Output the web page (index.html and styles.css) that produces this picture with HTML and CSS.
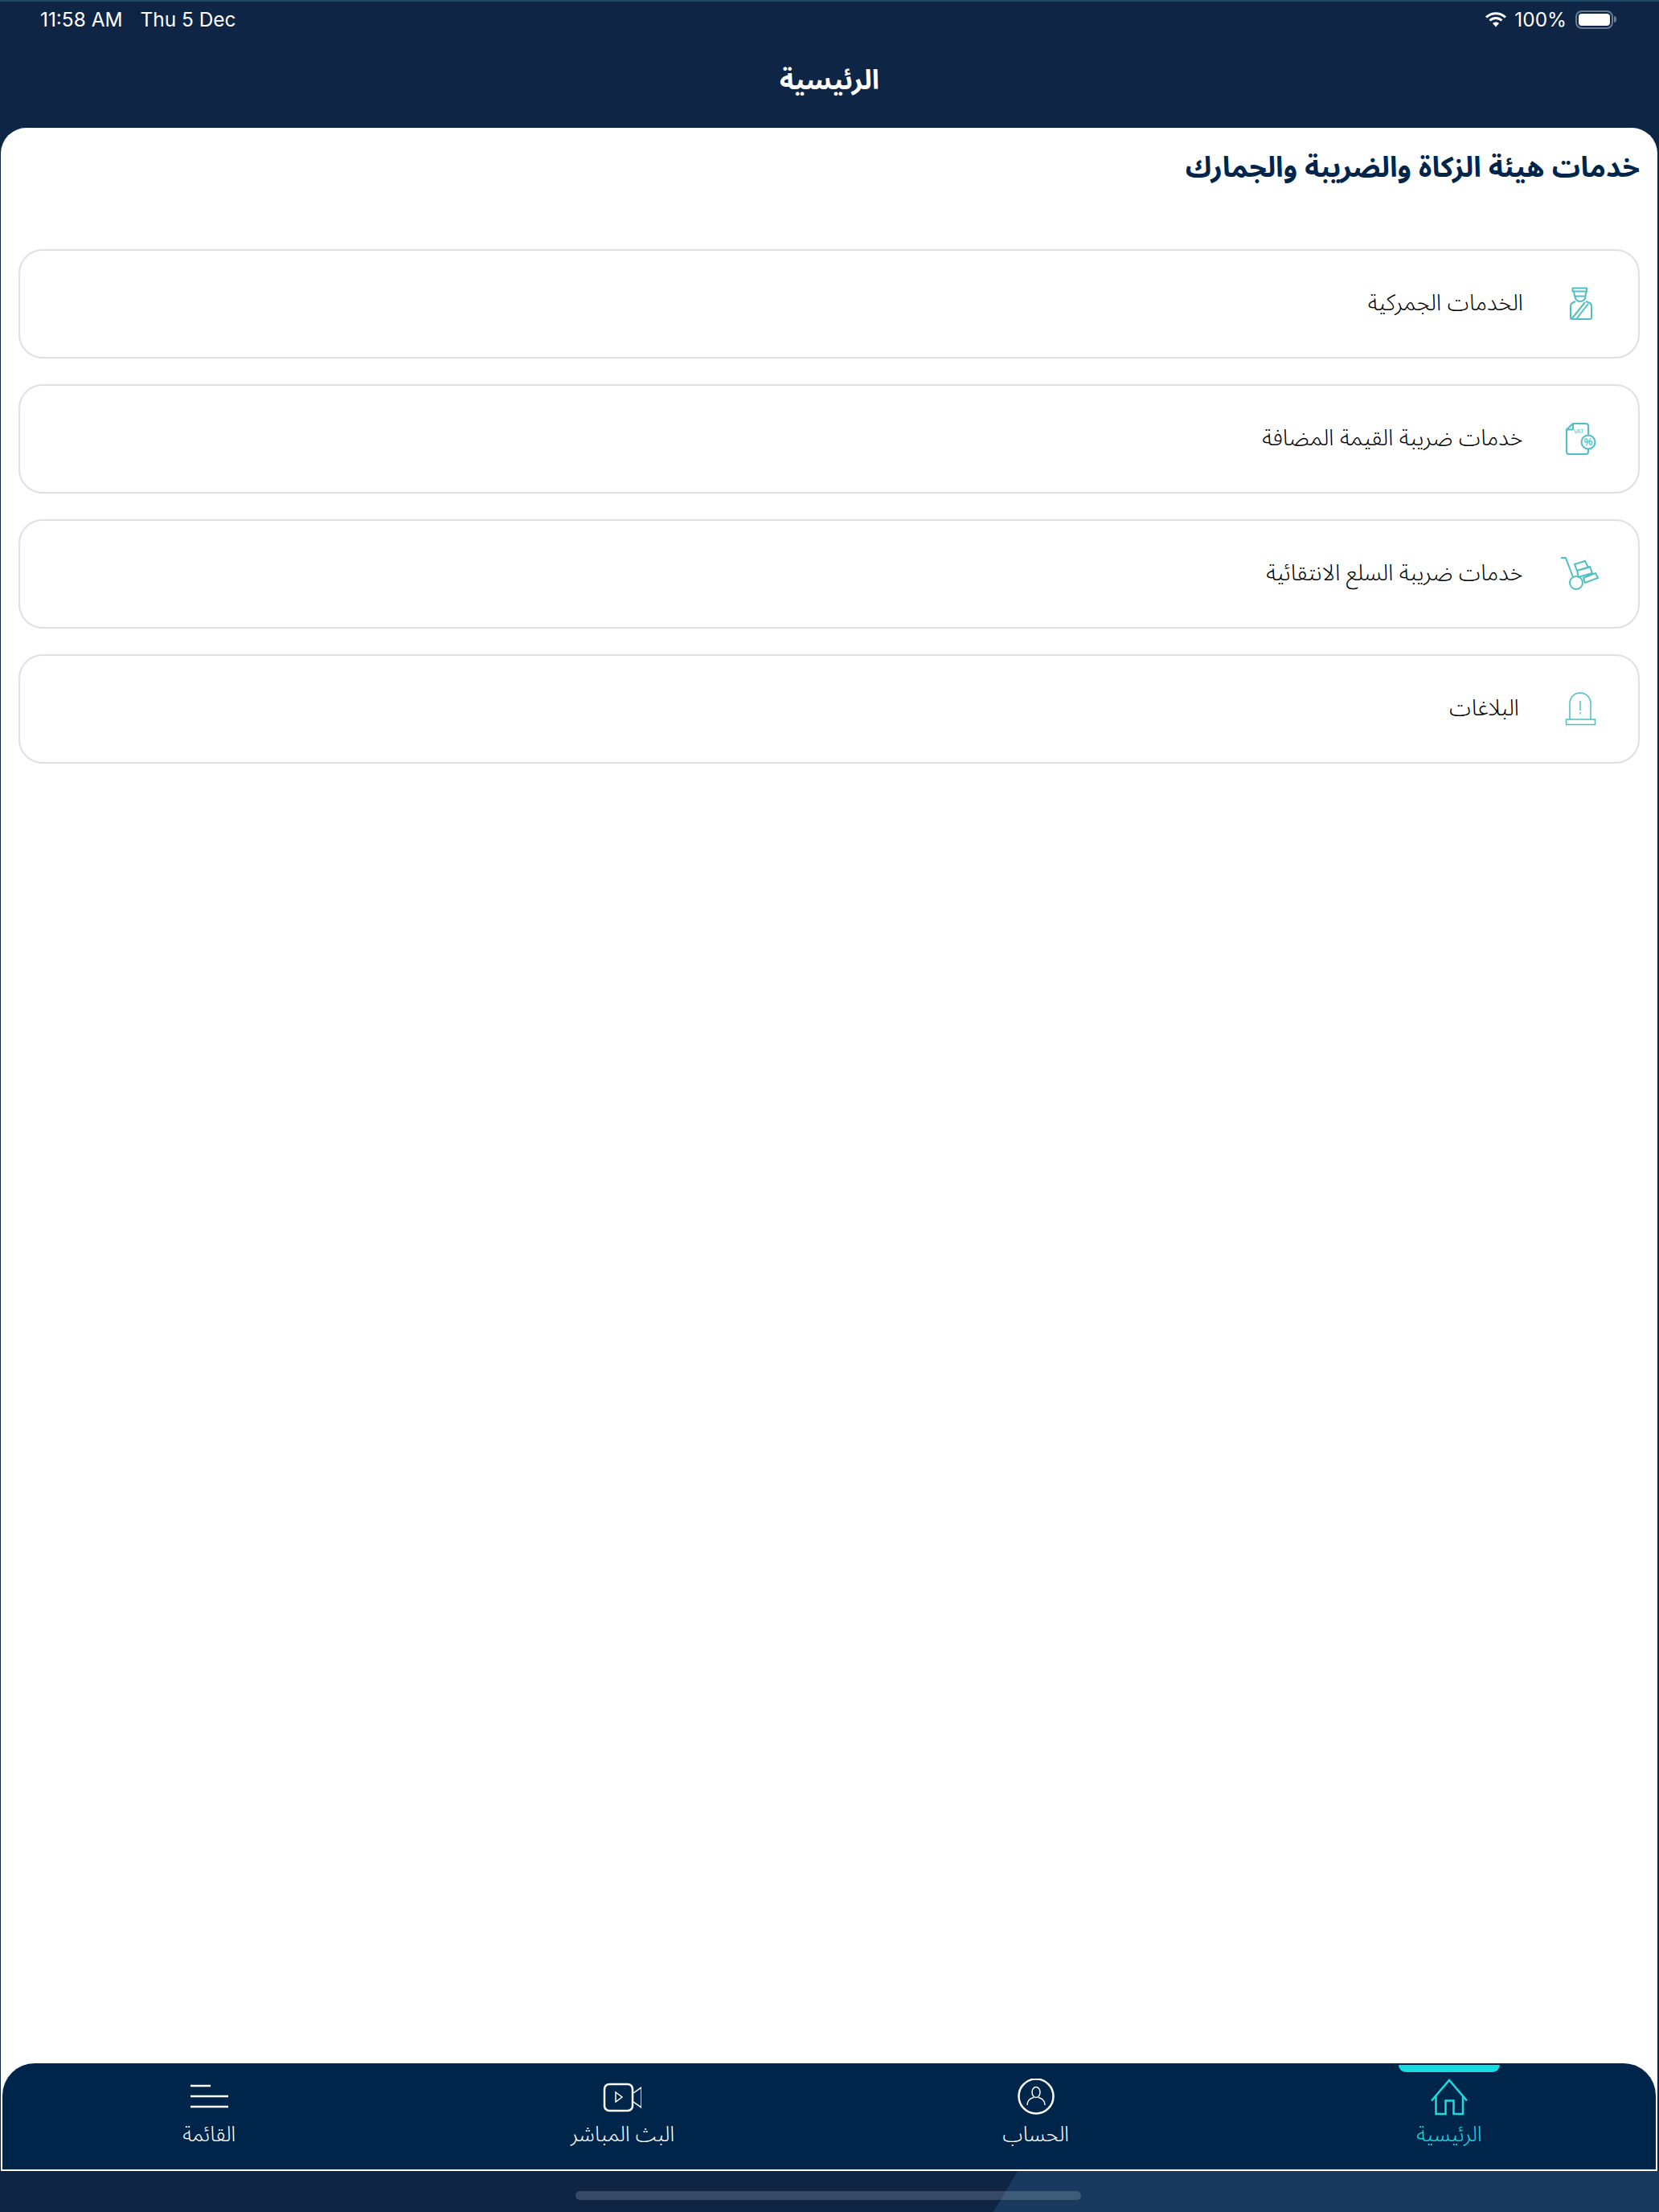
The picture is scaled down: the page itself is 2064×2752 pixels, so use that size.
FILE: index.html
```html
<!DOCTYPE html>
<html lang="ar" dir="rtl">
<head>
<meta charset="utf-8">
<title>الرئيسية</title>
<link rel="stylesheet" href="styles.css">
</head>
<body>
<div class="app">
  <header class="top">
    <div class="status" dir="ltr">
      <div class="status-left"><span>11:58 AM</span><span>Thu 5 Dec</span></div>
      <div class="status-right">
        <svg class="wifi" width="28" height="20" viewBox="0 0 28 20"><path class="wifi-arc" d="M2 7.5C9 1 19 1 26 7.5M6.5 11.5C11 7.5 17 7.5 21.5 11.5"/><path class="wifi-dot" d="M10 15c2.400-2 5.600-2 8 0l-4 4.500z"/></svg>
        <span>100%</span>
        <div class="battery"><div class="battery-fill"></div></div>
        <div class="battery-cap"></div>
      </div>
    </div>
    <h1 class="page-title">الرئيسية</h1>
  </header>

  <main class="panel">
    <section class="content">
      <h2 class="section-title">خدمات هيئة الزكاة والضريبة والجمارك</h2>
      <ul class="cards">
        <li class="card">
          <svg class="card-icon" viewBox="0 0 52 52"><path d="M16.500 6.500H34V10.500H16.500ZM18 10.500L19 16.500H32.500L33.500 10.500M19.500 16.500C19.500 20.500 22.500 23 26 23S32.500 20.500 32.500 16.500M20 23L16 25Q14 26 14 29V43Q14 45 16 45H38Q40 45 40 43V29Q40 26 38 25L33 23M32 24L15.500 44.500M36 26L21.500 44.500"/></svg>
          <span class="card-label">الخدمات الجمركية</span>
        </li>
        <li class="card">
          <svg class="card-icon" viewBox="0 0 52 52"><path d="M36 21.500V10A3 3 0 0 0 33 7H17L9 14.500V42A3 3 0 0 0 12 45H33A3 3 0 0 0 36 42V38.500M17 7V13Q17 14.500 15.500 14.500H9"/><circle cx="36" cy="30" r="8.500"/><text class="vat" x="24" y="19" direction="ltr">VAT</text><text class="percent" x="36" y="34" direction="ltr">%</text></svg>
          <span class="card-label">خدمات ضريبة القيمة المضافة</span>
        </li>
        <li class="card">
          <svg class="card-icon" viewBox="0 0 52 52"><path d="M2 6H8L17 30M19 14L32 10L36 18L22 22ZM22 22L38 17L41 25L24 30ZM30 31L45 25L48 31L32 37Z"/><circle cx="21" cy="37" r="8"/></svg>
          <span class="card-label">خدمات ضريبة السلع الانتقائية</span>
        </li>
        <li class="card card-short">
          <svg class="card-icon card-icon-thin" viewBox="0 0 52 52"><path d="M8.500 39H44.500V45.500H8.500ZM13 39V19A13 13 0 0 1 39 19V39M26 16V28M26 30V32.500"/></svg>
          <span class="card-label">البلاغات</span>
        </li>
      </ul>
    </section>

    <nav class="tabbar">
      <a class="tab tab-active">
        <span class="tab-marker"></span>
        <svg class="tab-icon" viewBox="0 0 48 46"><path d="M2 27.500L24 2L46 27.500M7.500 21V44H19.500V27.500H29.500V44H41V21"/></svg>
        <span class="tab-label">الرئيسية</span>
      </a>
      <a class="tab">
        <svg class="tab-icon" viewBox="0 0 48 46"><circle cx="24" cy="22" r="21.500"/><ellipse class="thin" cx="24" cy="17" rx="5" ry="6.500"/><path class="thin" d="M13 33C13 27 17 24.500 21 23.500M35 33C35 27 31 24.500 27 23.500"/></svg>
        <span class="tab-label">الحساب</span>
      </a>
      <a class="tab">
        <svg class="tab-icon" viewBox="-1 0 48 46"><rect x="1" y="7" width="35" height="33" rx="6"/><path class="thin" d="M37 18L47 11V36L37 29M15 17L23 23L15 29Z"/></svg>
        <span class="tab-label">البث المباشر</span>
      </a>
      <a class="tab">
        <svg class="tab-icon" viewBox="-1 0 48 46"><path d="M0 9H25M0 22H47M0 35H47"/></svg>
        <span class="tab-label">القائمة</span>
      </a>
    </nav>
  </main>

  <footer class="bottom"><div class="home-indicator"></div></footer>
</div>
</body>
</html>
```

FILE: styles.css
```css
* { box-sizing: border-box; }
html, body { margin: 0; padding: 0; }
body { font-family: "Noto Sans Arabic", "DejaVu Sans", sans-serif; background: #0f2545; }

.app { width: 2064px; height: 2752px; display: flex; flex-direction: column; background: #0f2545; border-top: 2px solid #1a4a66; }

.top { height: 157px; flex: none; color: #fff; }
.status { height: 44px; padding: 0 53px 0 50px; display: flex; justify-content: space-between; align-items: center; font-family: Inter, "Liberation Sans", sans-serif; font-size: 24.400px; }
.status-left { display: flex; gap: 22px; }
.status-right { display: flex; align-items: center; }
.wifi { margin-right: 9px; }
.wifi-arc { fill: none; stroke: #fff; stroke-width: 3; }
.wifi-dot { fill: #fff; }
.battery { width: 47px; height: 23px; margin-left: 11px; border: 2px solid #6a7a90; border-radius: 8px; padding: 2px; }
.battery-fill { height: 100%; background: #fff; border-radius: 4px; }
.battery-cap { width: 3px; height: 8px; margin-left: 1px; background: #6a7a90; border-radius: 0 3px 3px 0; }
.page-title { margin: 33px 0 0; text-align: center; font-size: 33.500px; line-height: 44px; font-weight: 700; }

.panel { flex: 1; min-height: 0; margin: 0 2px 0 1px; background: #fff; border-radius: 32px 32px 0 0; display: flex; flex-direction: column; padding-bottom: 2px; }
.content { flex: 1; padding: 26px 22px 0 22px; }
.section-title { margin: 0; font-size: 35px; line-height: 48px; font-weight: 700; color: #00254a; }
.cards { list-style: none; margin: 77px 0 0; padding: 0; display: flex; flex-direction: column; gap: 32px; }
.card { height: 136px; border: 2px solid #e0e0e0; border-radius: 30px; display: flex; align-items: center; padding-right: 46px; gap: 45px; }
.card-short { gap: 50px; }
.card-icon { width: 52px; height: 52px; flex: none; fill: none; stroke: #4fbfc4; stroke-width: 2; }
.card-icon-thin { stroke-width: 1.500; }
.card-icon .vat { font: 7px "Liberation Sans", sans-serif; fill: #4fbfc4; stroke: none; text-anchor: middle; }
.card-icon .percent { font: 700 12px "Liberation Sans", sans-serif; fill: #4fbfc4; stroke: none; text-anchor: middle; }
.card-label { font-size: 28px; line-height: 40px; font-weight: 300; color: #000; }

.tabbar { height: 132px; flex: none; margin: 0 2px; background: #00254a; border-radius: 40px 40px 0 0; display: grid; grid-template-columns: repeat(4, 1fr); }
.tab { position: relative; display: flex; flex-direction: column; align-items: center; padding-top: 19px; gap: 8px; color: #fff; }
.tab-icon { width: 48px; height: 46px; fill: none; stroke: #fff; stroke-width: 2.500; }
.tab-icon .thin { stroke-width: 1.500; }
.tab-label { font-size: 26px; line-height: 32px; font-weight: 300; }
.tab-active { color: #17dde0; }
.tab-active .tab-icon { stroke: #17dde0; }
.tab-marker { position: absolute; top: 2px; left: 50%; width: 126px; height: 9px; margin-left: -63px; background: #17dde0; border-radius: 0 0 10px 10px; }

.bottom { flex: none; height: 51px; position: relative; display: flex; justify-content: center; padding-top: 25px; }
.bottom::before { content: ""; position: absolute; inset: 0 0 0 1236px; background: #173a5e; clip-path: polygon(30px 0, 100% 0, 100% 100%, 0 100%); }
.home-indicator { position: relative; width: 629px; height: 11px; margin-left: -3px; border-radius: 6px; background: rgba(255, 255, 255, 0.17); }
```
